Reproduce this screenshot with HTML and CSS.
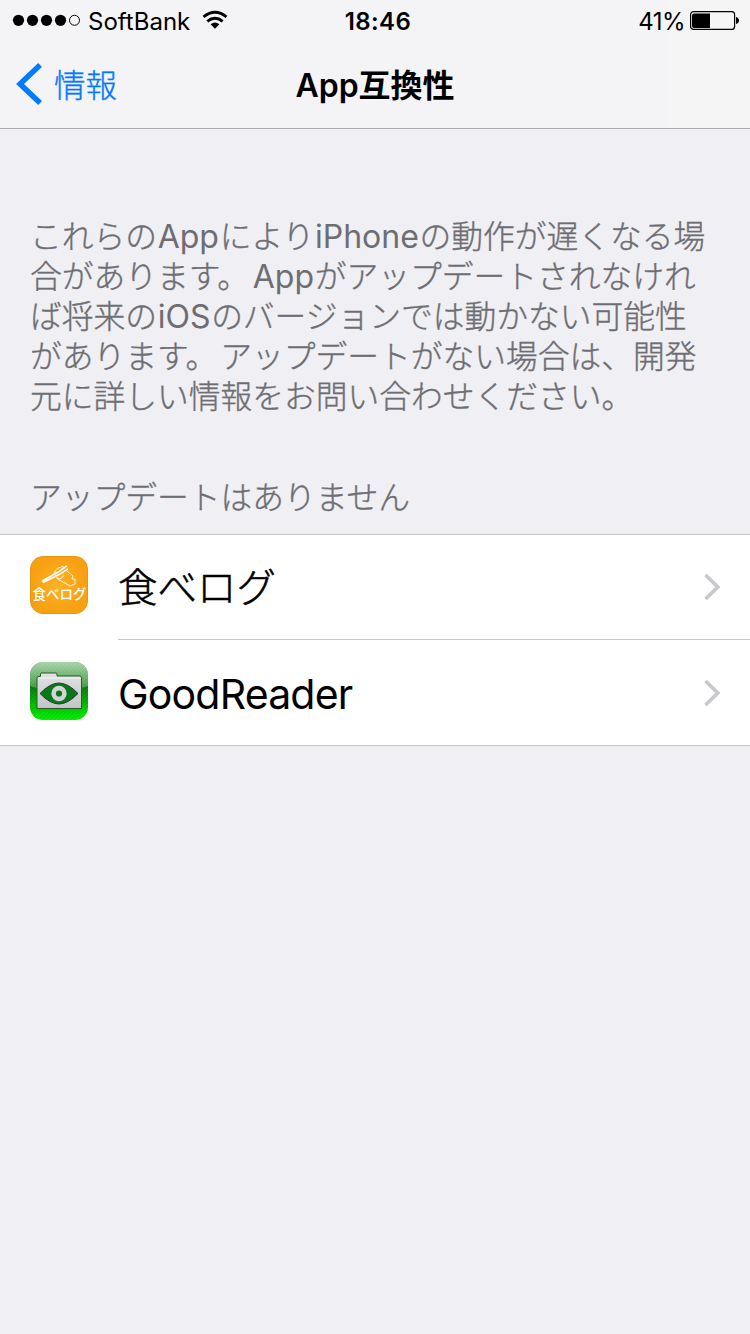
FILE: index.html
```html
<!DOCTYPE html>
<html lang="ja">
<head>
<meta charset="utf-8">
<title>App互換性</title>
<link rel="stylesheet" href="styles.css">
</head>
<body>
<header class="header">
  <div class="status">
    <div class="status-left">
      <svg class="signal" width="70" height="14" viewBox="0 0 70 14"><g><circle cx="6.5" cy="7.3" r="5.6"/><circle cx="20.5" cy="7.3" r="5.6"/><circle cx="34.5" cy="7.3" r="5.6"/><circle cx="48.5" cy="7.3" r="5.6"/></g><circle cx="62.5" cy="7.3" r="5" fill="none" stroke="#000"/></svg>
      <span class="carrier">SoftBank</span>
      <svg class="wifi" width="26" height="20" viewBox="0 0 26 20"><g fill="none" stroke="#000" stroke-width="2.8"><path d="M1.5 6.9Q13 -2.3 24.5 6.9"/><path d="M5.3 11.3Q13 5.1 20.7 11.3"/></g><path d="M8.6 14.3Q13 10.9 17.4 14.3L13 18.7Z"/></svg>
    </div>
    <span class="clock">18:46</span>
    <div class="status-right">
      <span class="percent">41%</span>
      <svg class="battery" width="50" height="20" viewBox="0 0 50 20"><rect x=".6" y="1.6" width="44" height="17.8" rx="3" fill="none" stroke="#000" stroke-width="1.2"/><path d="M4 3.4H20V18H4Q2 18 2 16V5.4Q2 3.4 4 3.4Z"/><path d="M46 7Q49 8 49 10.5T46 14Z"/></svg>
    </div>
  </div>
  <nav class="nav">
    <a class="back"><svg width="28" height="44" viewBox="0 0 28 44"><path d="M24.1 3L4 22L24.1 41" fill="none" stroke="#007aff" stroke-width="5.4"/></svg><span class="back-label">情報</span></a>
    <h1 class="title"><span class="title-latin">App</span>互換性</h1>
  </nav>
</header>
<main>
  <p class="note">これらの<span class="latin">App</span>により<span class="latin">iPhone</span>の動作が遅くなる場<br>合があります<span class="stop">。</span><span class="latin">App</span>がアップデートされなけれ<br>ば将来の<span class="latin">iOS</span>のバージョンでは動かない可能性<br>があります<span class="stop">。</span>アップデートがない場合は、開発<br>元に詳しい情報をお問い合わせください。</p>
  <h2 class="section">アップデートはありません</h2>
  <ul class="list">
    <li class="row">
      <svg class="app-icon" width="58" height="58" viewBox="0 0 58 58">
        <defs><radialGradient id="orange"><stop offset="0" stop-color="#ffb126"/><stop offset="1" stop-color="#f7a011"/></radialGradient></defs>
        <rect x=".5" y=".5" width="57" height="57" rx="12.5" fill="url(#orange)" stroke="#e89612"/>
        <g fill="none" stroke="#fff" stroke-linecap="round" stroke-linejoin="round">
          <path d="M12.5 25L29 15.5L36.5 10.2M13.5 26.2L31 17.5L37.5 13.2" stroke-width="1.6"/>
          <path d="M24 17L27 12.5L33 10.5M26 21.5L30 23L34 19.5M37 15L43 20L42 23L45 23V28L40 30L35 27L30 24.5L27 22" stroke-width="1" opacity=".85"/>
        </g>
        <text x="2.5" y="42.6" class="icon-text" textLength="54">食べログ</text>
      </svg>
      <div class="cell"><span class="name-ja">食べログ</span><svg class="chevron" width="17" height="28" viewBox="0 0 17 28"><path d="M1.5 2L13.8 14L1.5 26" fill="none" stroke="#c7c7cc" stroke-width="3.6"/></svg></div>
    </li>
    <li class="row">
      <svg class="app-icon" width="58" height="58" viewBox="0 0 58 58">
        <defs>
          <linearGradient id="green" x2="0" y2="1"><stop stop-color="#087c0d"/><stop offset=".45" stop-color="#087b0b"/><stop offset=".8" stop-color="#00c400"/><stop offset="1" stop-color="#00ed00"/></linearGradient>
          <linearGradient id="gloss" x2="0" y2="1"><stop stop-color="#fff" stop-opacity=".65"/><stop offset="1" stop-color="#fff" stop-opacity=".18"/></linearGradient>
          <linearGradient id="silver" x2="0" y2="1"><stop stop-color="#e2e2e4"/><stop offset="1" stop-color="#c2c4c6"/></linearGradient>
          <pattern id="stripe" width="4" height="4" patternUnits="userSpaceOnUse"><path d="M0 4L4 0" stroke="#fff" stroke-width=".7" opacity=".1"/></pattern>
          <clipPath id="tile"><rect width="58" height="58" rx="13"/></clipPath>
        </defs>
        <g clip-path="url(#tile)"><path fill="url(#green)" d="M0 0H58V58H0Z"/><path fill="url(#gloss)" d="M0 0H58V24Q29 34 0 24Z"/><path fill="url(#stripe)" d="M0 0H58V58H0Z"/></g>
        <path d="M7 46.5V16Q7 14.5 9 14.5H10.5V12Q10.5 11 12 11H26Q27 11 27 12V14H50Q51.5 14 51.5 16V46.5Z" fill="url(#silver)" stroke="#285b2a" stroke-width="1"/>
        <path d="M8 16H51" stroke="#f5f5f5"/>
        <path d="M10 31.5Q20 21 29 21T48 31.5Q38 42 29 42T10 31.5Z" fill="#087818" stroke="#30363a"/>
        <circle cx="29" cy="31.5" r="5.4" fill="none" stroke="#d2d4d5" stroke-width="4.6"/>
      </svg>
      <div class="cell"><span class="name">GoodReader</span><svg class="chevron" width="17" height="28" viewBox="0 0 17 28"><path d="M1.5 2L13.8 14L1.5 26" fill="none" stroke="#c7c7cc" stroke-width="3.6"/></svg></div>
    </li>
  </ul>
</main>
</body>
</html>
```
FILE: styles.css
```css
* { box-sizing: border-box; }
body {
  margin: 0;
  min-height: 1334px;
  background: #efeff4;
  color: #000;
  font-family: Inter, "Noto Sans CJK JP", sans-serif;
}
svg { display: block; flex: none; }
.header {
  height: 129px;
  background: linear-gradient(90deg, #f4f4f7 668px, #f5f5f6 668px);
  border-bottom: 1px solid #a9a9ae;
}
.status {
  display: grid;
  grid-template-columns: 1fr auto 1fr;
  align-items: center;
  height: 40px;
  padding: 0 10px 0 12px;
  font-size: 24px;
}
.status-left, .status-right { display: flex; align-items: center; }
.status-right { justify-content: flex-end; }
.carrier, .clock, .percent { padding-top: 3px; line-height: 37px; }
.carrier { margin-left: 6px; }
.wifi { margin-left: 12px; }
.clock { padding-left: 4px; font-weight: 600; letter-spacing: 0.4px; }
.percent { margin-right: 5px; letter-spacing: -0.5px; }
.nav {
  display: grid;
  grid-template-columns: 1fr auto 1fr;
  align-items: center;
  height: 88px;
}
.back {
  display: flex;
  align-items: center;
  gap: 10px;
  padding-left: 16px;
  color: #007aff;
  font: 300 31.5px/40px "Noto Sans CJK JP", sans-serif;
  -webkit-text-stroke: 0.35px;
}
.back-label { padding-bottom: 3px; }
.title {
  margin: 0;
  padding-bottom: 3px;
  font: 600 32px/44px "Noto Sans CJK JP", sans-serif;
}
.title-latin { font-family: Inter, sans-serif; line-height: 1; }
.note {
  margin: 85px 0 0;
  padding-left: 30px;
  color: #6d6d72;
  font: 300 31.75px/40px "Noto Sans CJK JP", sans-serif;
  white-space: nowrap;
  -webkit-text-stroke: 0.35px;
}
.latin {
  padding: 0 0.7px;
  font-family: Inter, sans-serif;
  font-weight: 400;
  font-size: 32px;
  line-height: 1;
  -webkit-text-stroke: 0;
}
.stop { padding-right: 3px; }
.section {
  margin: 61px 0 19px;
  padding-left: 30px;
  color: #6d6d72;
  font: 300 31.75px/40px "Noto Sans CJK JP", sans-serif;
  -webkit-text-stroke: 0.35px;
}
.list {
  margin: 0;
  padding: 0;
  list-style: none;
  background: #fff;
  border-top: 1px solid #c8c7cc;
  border-bottom: 1px solid #c8c7cc;
}
.row { display: flex; padding-left: 30px; }
.app-icon { margin: 21px 30px 0 0; }
.cell {
  display: flex;
  flex: 1;
  align-items: center;
  justify-content: space-between;
  height: 105px;
  padding-right: 29px;
  border-bottom: 1px solid #c8c7cc;
}
.row:last-child .cell { border-bottom: 0; }
.row:last-child .app-icon { margin-top: 22px; }
.name-ja {
  padding-bottom: 5px;
  font: 300 39.5px/60px "Noto Sans CJK JP", sans-serif;
  -webkit-text-stroke: 0.5px;
}
.name { padding-top: 2px; font-size: 41px; line-height: 60px; letter-spacing: -0.8px; }
.icon-text { fill: #fff; font: 500 13.5px "Noto Sans CJK JP", sans-serif; }
```
